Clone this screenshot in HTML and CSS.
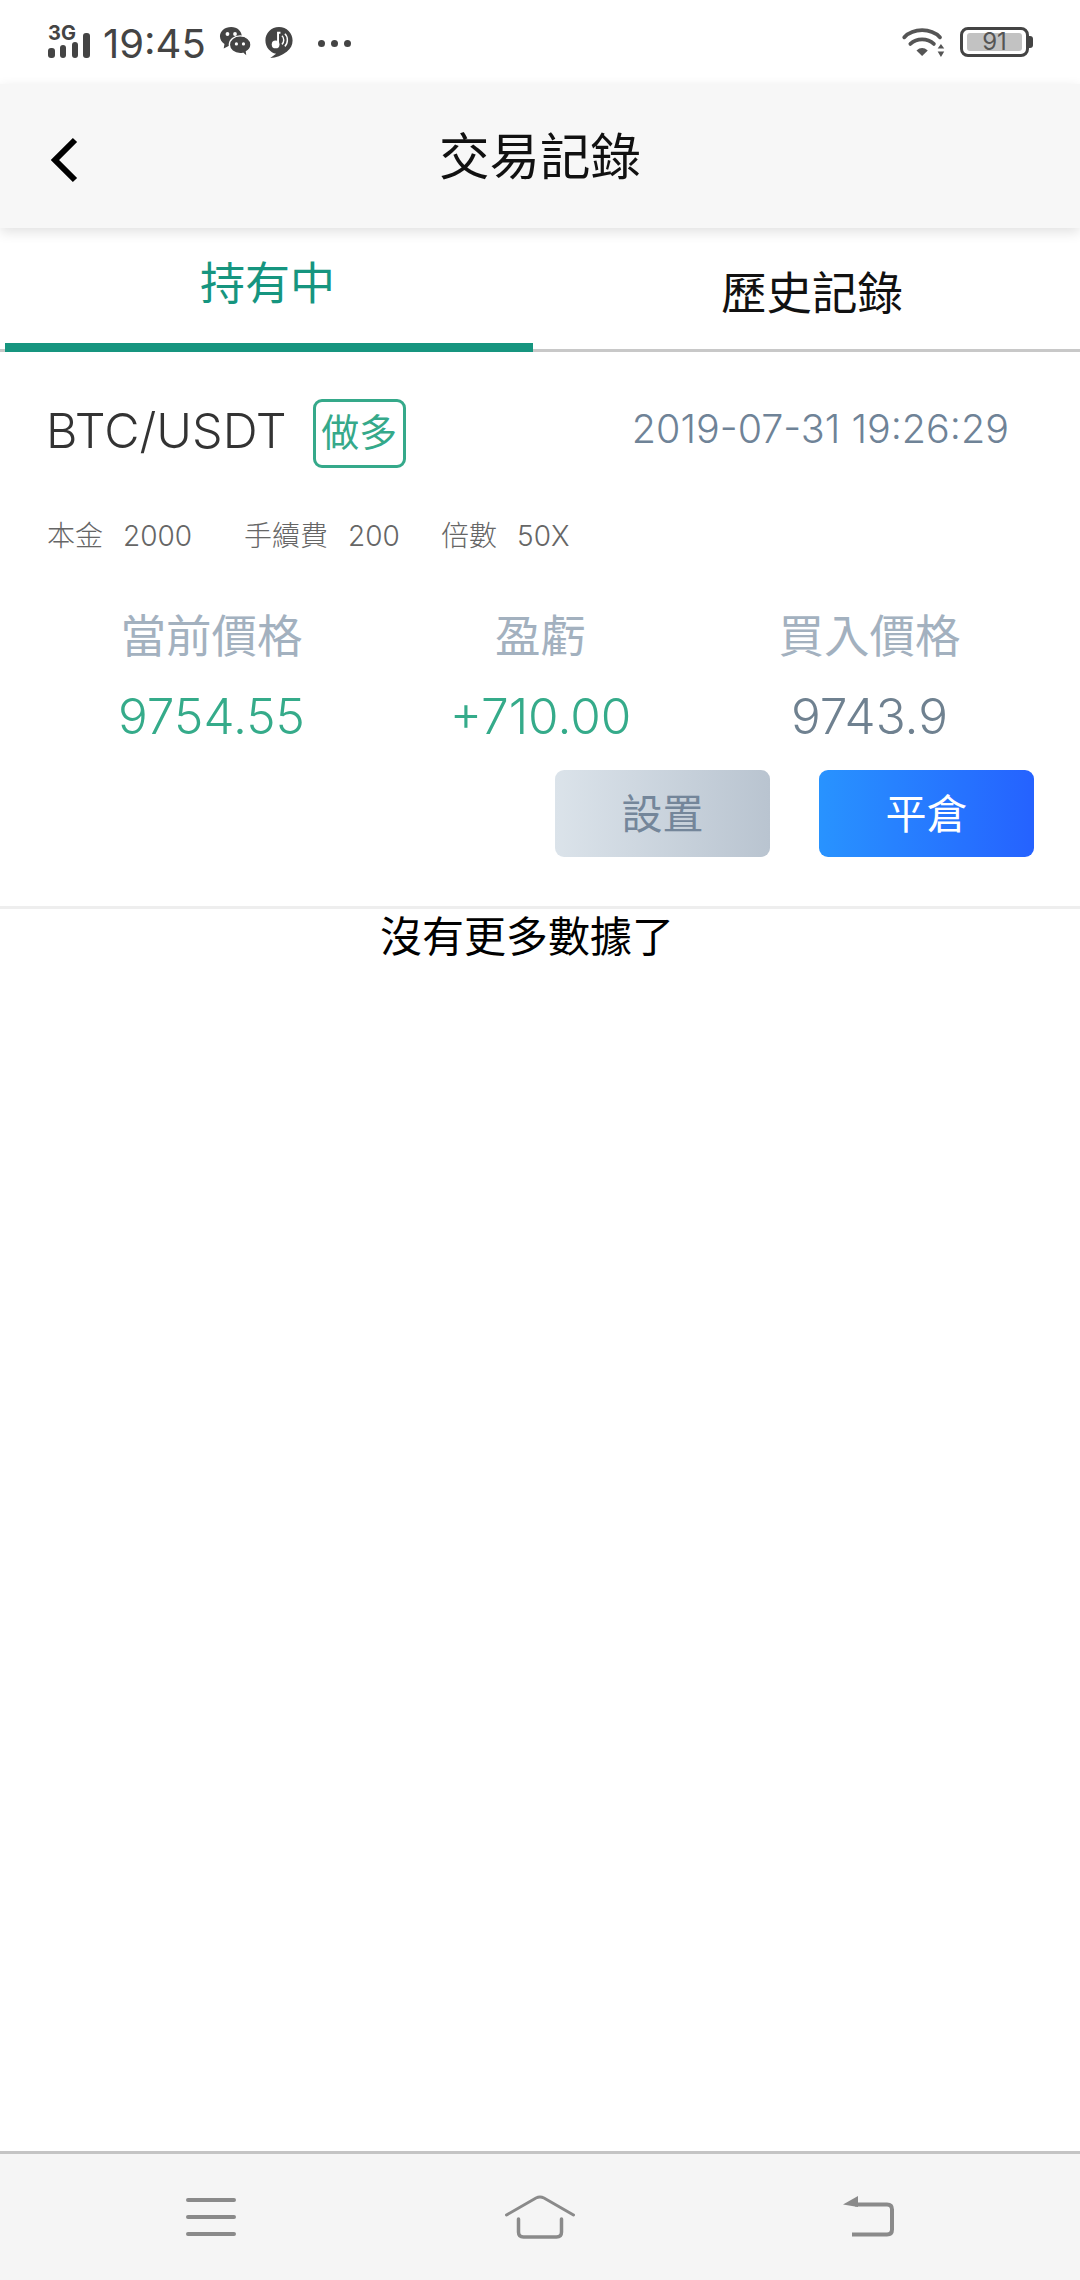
FILE: index.html
```html
<!DOCTYPE html>
<html lang="zh-Hant">
<head>
    <meta charset="UTF-8">
    <meta name="viewport" content="width=device-width, initial-scale=1.0">
    <title>交易記錄</title>
    <link rel="stylesheet" href="styles.css">
</head>
<body>
    <div class="status-bar">
        <svg class="ic-signal" width="44" height="48" viewBox="0 0 44 48">
            <text x="1" y="22" class="ic-signal-text">3G</text>
            <rect x="1" y="30" width="7" height="10" rx="3"/>
            <rect x="13" y="27" width="6" height="13" rx="3"/>
            <rect x="25" y="24" width="6" height="16" rx="3"/>
            <rect x="36" y="15" width="7" height="25" rx="3"/>
        </svg>
        <span class="status-time">19:45</span>
        <svg class="ic-wechat" width="34" height="32" viewBox="0 0 34 34">
            <path d="M13 1C6 1 1 5.500 1 11c0 3.500 2 6.300 4.800 8.100L5 24l5.200-2.800c1 .2 2 .3 3 .3 6.500 0 11-4.800 11-10.500C24.200 5.500 19.500 1 13 1z" fill="#444"/>
            <circle cx="9" cy="8.500" r="2" fill="#fff"/>
            <circle cx="17" cy="8.500" r="2" fill="#fff"/>
            <path d="M22.500 10.500c-6.500 0-11.500 4.200-11.500 9.500s5 9.500 11.500 9.500c1 0 2-.1 3-.4l4.500 3.900-.8-5.700c2.900-1.700 4.800-4.400 4.800-7.300 0-5.300-5-9.500-11.500-9.500z" fill="#444" stroke="#fff" stroke-width="1.500"/>
            <circle cx="18.500" cy="19" r="1.700" fill="#fff"/>
            <circle cx="26" cy="19" r="1.700" fill="#fff"/>
        </svg>
        <svg class="ic-music" width="30" height="33" viewBox="0 0 30 34">
            <path d="M15 1C7 1 1 7 1 15c0 7 5 12.500 11 13.700L6 33c6-.5 12-2.500 17-6.500 4-3 6-7 6-11.500C29 7 23 1 15 1z" fill="#444"/>
            <circle cx="11.500" cy="19" r="4" fill="#fff"/>
            <path d="M14 19V7l2.500 0" stroke="#fff" stroke-width="2" fill="none"/>
            <path d="M18 10c2.500 2 2.500 7 0 9M21 8c3.500 3 3.500 10 0 13" stroke="#fff" stroke-width="1.500" fill="none"/>
        </svg>
        <span class="status-dots"><i></i><i></i><i></i></span>
        <span class="status-right">
            <svg class="ic-wifi" width="46" height="32" viewBox="0 0 46 34">
                <path d="M2 12C12 2 30 2 40 12" stroke="#555" stroke-width="4" fill="none" stroke-linecap="round"/>
                <path d="M8.500 19c7-6.500 18-6.500 25 0" stroke="#555" stroke-width="4" fill="none" stroke-linecap="round"/>
                <path d="M15 26c4-3.500 8-3.500 12 0l-6 6z" fill="#555"/>
                <path d="M41 19l3.500 5h-7zM41 33l3.500-6h-7z" fill="#555"/>
            </svg>
            <span class="battery"><span class="battery-fill">91</span></span>
            <span class="battery-nub"></span>
        </span>
    </div>

    <header class="top-bar">
        <svg class="ic-back" width="30" height="46" viewBox="0 0 30 46">
            <path d="M25 3L5 23l20 20" stroke="#000" stroke-width="6" fill="none"/>
        </svg>
        <h1 class="top-title">交易記錄</h1>
    </header>

    <nav class="tabs">
        <div class="tab tab-active">持有中</div>
        <div class="tab tab-other">歷史記錄</div>
    </nav>

    <main class="content">
        <section class="order">
            <div class="order-head">
                <span class="pair">BTC/USDT</span>
                <span class="tag">做多</span>
                <span class="order-date">2019-07-31 19:26:29</span>
            </div>
            <div class="order-meta">
                <span class="meta-item">本金<span class="meta-num">2000</span></span>
                <span class="meta-item">手續費<span class="meta-num">200</span></span>
                <span class="meta-item">倍數<span class="meta-num">50X</span></span>
            </div>
            <div class="stats">
                <div class="stat">
                    <div class="stat-label">當前價格</div>
                    <div class="stat-value green">9754.55</div>
                </div>
                <div class="stat">
                    <div class="stat-label">盈虧</div>
                    <div class="stat-value green">+710.00</div>
                </div>
                <div class="stat">
                    <div class="stat-label">買入價格</div>
                    <div class="stat-value slate">9743.9</div>
                </div>
            </div>
            <div class="order-actions">
                <button class="btn btn-gray">設置</button>
                <button class="btn btn-blue">平倉</button>
            </div>
        </section>
        <p class="no-more">沒有更多數據了</p>
    </main>

    <footer class="nav-bar">
        <svg width="50" height="38" viewBox="0 0 50 38">
            <path d="M2 2h46M2 19h46M2 36h46" stroke="#8a8a8a" stroke-width="4" stroke-linecap="round" fill="none"/>
        </svg>
        <svg width="70" height="44" viewBox="0 0 70 44">
            <path d="M1.500 20L31 3q4-2 8 0l29.500 17" stroke="#8a8a8a" stroke-width="3" stroke-linecap="round" fill="none"/>
            <path d="M13.500 24v13q0 5 5 5h33q5 0 5-5V24" stroke="#8a8a8a" stroke-width="3.500" stroke-linecap="round" fill="none"/>
        </svg>
        <svg width="52" height="42" viewBox="0 0 52 42">
            <path d="M0 8.500L15 0v11z" fill="#8a8a8a"/>
            <path d="M12 8.500h32q5 0 5 5v20q0 5-5 5H9" stroke="#8a8a8a" stroke-width="4" fill="none"/>
        </svg>
    </footer>
</body>
</html>
```

FILE: styles.css
```css
* {
    box-sizing: border-box;
}

html,
body {
    height: 100%;
}

body {
    margin: 0;
    height: 2280px;
    display: flex;
    flex-direction: column;
    background-color: #fff;
    font-family: Inter, "Noto Sans CJK TC", sans-serif;
    font-weight: 300;
}

/* status bar */
.status-bar {
    height: 84px;
    display: flex;
    align-items: center;
    padding-left: 47px;
    color: #444;
}

.ic-signal {
    fill: #444;
}

.ic-signal-text {
    font-size: 20px;
    font-weight: 700;
}

.status-time {
    margin-left: 12px;
    padding-top: 3px;
    font-size: 40px;
    font-weight: 400;
}

.ic-wechat {
    margin-left: 12px;
}

.ic-music {
    margin-left: 12px;
}

.status-dots {
    display: flex;
    gap: 6px;
    margin-left: 24px;
    padding-top: 2px;
}

.status-dots i {
    width: 7px;
    height: 7px;
    border-radius: 50%;
    background: #444;
}

.status-right {
    margin-left: auto;
    margin-right: 47px;
    display: flex;
    align-items: center;
}

.battery {
    margin-left: 13px;
    width: 69px;
    height: 30px;
    padding: 3px 4px;
    border: 3px solid #444;
    border-radius: 8px;
    display: flex;
}

.battery-fill {
    width: 100%;
    background: #c2c2c2;
    border-radius: 3px;
    font-size: 24px;
    line-height: 18px;
    font-weight: 400;
    color: #555;
    text-align: center;
}

.battery-nub {
    width: 4px;
    height: 12px;
    background: #444;
    border-radius: 0 3px 3px 0;
}

/* title bar */
.top-bar {
    height: 144px;
    display: flex;
    align-items: center;
    padding-left: 50px;
    background: #f7f7f7;
    box-shadow: 0 4px 12px rgba(0, 0, 0, 0.12);
    position: relative;
}

.ic-back {
    margin-top: 7px;
}

.top-title {
    margin: 0 0 0 359px;
    padding-bottom: 6px;
    font-size: 50.500px;
    font-weight: 400;
    color: #111;
}

/* tabs */
.tabs {
    height: 124px;
    display: flex;
    border-bottom: 3px solid #c8c8c8;
}

.tab {
    line-height: 60px;
    font-weight: 400;
    text-align: center;
}

.tab-active {
    width: 528px;
    margin-left: 5px;
    margin-bottom: -3px;
    padding: 26px 3px 0 0;
    font-size: 45px;
    color: #16957f;
    border-bottom: 9px solid #16957f;
}

.tab-other {
    flex: 1;
    padding: 36px 0 0 11px;
    font-size: 45.500px;
    color: #111;
}

/* order card */
.content {
    flex: 1;
}

.order {
    height: 557px;
    padding: 0 46px;
    border-bottom: 3px solid #eee;
}

.order-head {
    display: flex;
    align-items: center;
    padding-top: 47px;
}

.pair {
    padding-bottom: 6px;
    font-size: 48.500px;
    color: #333;
}

.tag {
    margin-left: 26px;
    width: 93px;
    height: 69px;
    border: 3px solid #35a98a;
    border-radius: 9px;
    font-size: 38px;
    font-weight: 400;
    line-height: 60px;
    text-align: center;
    color: #35a98a;
}

.order-date {
    margin-left: auto;
    margin-right: 25px;
    padding-bottom: 10px;
    font-size: 39.500px;
    color: #6f8397;
}

.order-meta {
    display: grid;
    grid-template-columns: repeat(3, 197px);
    margin: 46px 0 0 1px;
    font-size: 28px;
    color: #666;
}

.meta-num {
    margin-left: 20px;
}

.stats {
    display: grid;
    grid-template-columns: repeat(3, 329px);
    margin: 46px 0 0 1px;
    text-align: center;
}

.stat-label {
    font-size: 45.500px;
    font-weight: 400;
    color: #a3b1bf;
}

.stat-value {
    margin-top: 20px;
    font-size: 49.500px;
}

.green {
    color: #35ab8a;
}

.slate {
    color: #6f8190;
}

.order-actions {
    display: flex;
    justify-content: flex-end;
    gap: 49px;
    margin: 24px 0 0;
}

.btn {
    width: 215px;
    height: 87px;
    padding: 0 0 6px;
    border: none;
    border-radius: 9px;
    font-family: inherit;
    font-size: 41px;
}

.btn-gray {
    background: linear-gradient(90deg, #dbe3ea, #b9c4d0);
    color: #74869a;
}

.btn-blue {
    background: linear-gradient(90deg, #2893ff, #2562ff);
    color: #fff;
}

.no-more {
    margin: 0;
    padding-left: 380px;
    font-size: 42px;
    line-height: 56px;
    font-weight: 400;
    color: #000;
}

/* bottom nav */
.nav-bar {
    height: 129px;
    display: grid;
    grid-template-columns: repeat(3, 329px);
    justify-items: center;
    align-items: center;
    padding: 0 46px;
    background: #f5f5f5;
    border-top: 3px solid #c4c4c4;
}
```
